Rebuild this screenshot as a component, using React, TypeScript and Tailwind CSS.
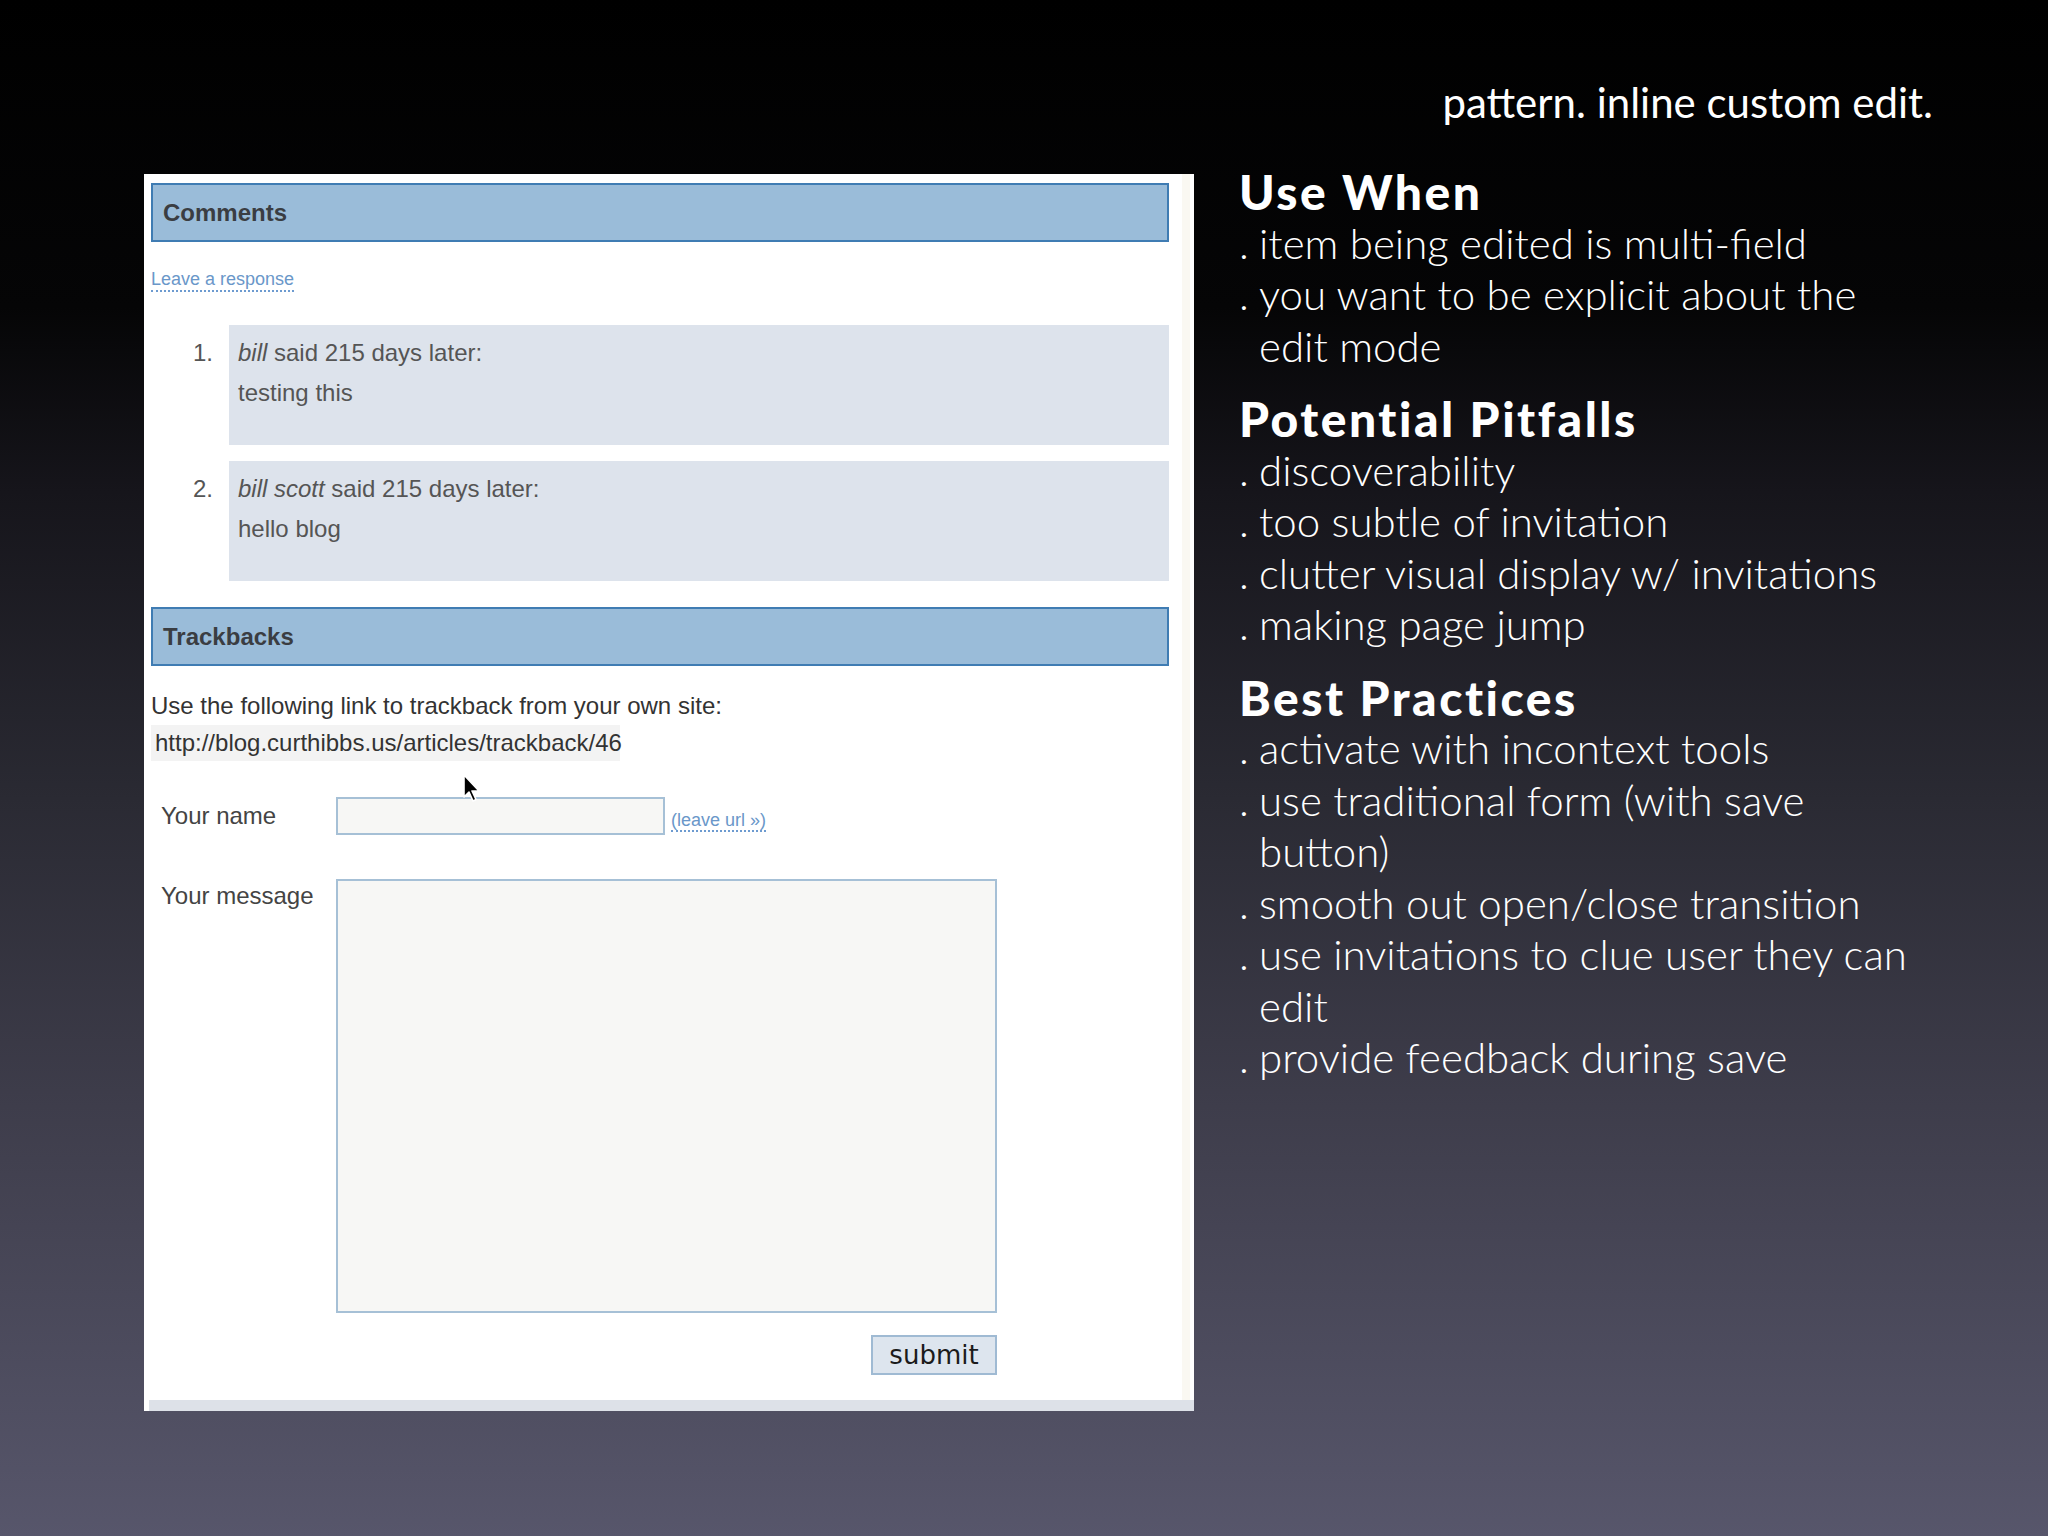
import React from "react";

// Slide: "pattern. inline custom edit." — screenshot of a blog comment form + notes.

const usaWhen = [
  ["item being edited is multi-field"],
  ["you want to be explicit about the", "edit mode"],
];

const pitfalls = [
  ["discoverability"],
  ["too subtle of invitation"],
  ["clutter visual display w/ invitations"],
  ["making page jump"],
];

const practices = [
  ["activate with incontext tools"],
  ["use traditional form (with save", "button)"],
  ["smooth out open/close transition"],
  ["use invitations to clue user they can", "edit"],
  ["provide feedback during save"],
];

function Bullet({ lines }: { lines: string[] }) {
  return (
    <div className="flex">
      <span className="w-[20px] shrink-0">.</span>
      <div>
        {lines.map((l) => (
          <div key={l}>{l}</div>
        ))}
      </div>
    </div>
  );
}

function Bagian({ judul, isi, first }: { judul: string; isi: string[][]; first?: boolean }) {
  return (
    <div className={first ? "" : "mt-[21px]"}>
      <h2 className="text-[48px] font-black tracking-[2.5px]">{judul}</h2>
      {isi.map((lines) => (
        <Bullet key={lines[0]} lines={lines} />
      ))}
    </div>
  );
}

function Header({ label }: { label: string }) {
  return (
    <div className="flex h-[59px] w-[1018px] items-center border-2 border-[#3f7cb3] bg-[#9abcd9] pl-[10px] text-[24px] font-bold text-[#3a3d42]">
      {label}
    </div>
  );
}

function Komentar({ no, nama, isi }: { no: string; nama: string; isi: string }) {
  return (
    <div className="flex">
      <div className="w-[78px] pr-[16px] pt-[14px] text-right text-[#555]">{no}</div>
      <div className="h-[120px] w-[940px] bg-[#dde3ec] pl-[9px] pt-[14px] text-[#555]">
        <div>
          <i>{nama}</i> said 215 days later:
        </div>
        <div className="mt-[12px]">{isi}</div>
      </div>
    </div>
  );
}

function Panel() {
  return (
    <div
      className="relative flex h-[1237px] w-[1050px] shrink-0 flex-col bg-white pl-[7px] pt-[9px] text-[24px] leading-[28px]"
      style={{ fontFamily: '"Liberation Sans", Arial, sans-serif' }}
    >
      <Header label="Comments" />
      <a className="mt-[26px] self-start border-b-2 border-dotted border-[#6d9bd0] text-[18px] leading-[22px] text-[#6a97c9]">
        Leave a response
      </a>
      <div className="mt-[33px] flex flex-col gap-[16px]">
        <Komentar no="1." nama="bill" isi="testing this" />
        <Komentar no="2." nama="bill scott" isi="hello blog" />
      </div>
      <div className="mt-[26px]">
        <Header label="Trackbacks" />
      </div>
      <p className="mt-[26px] text-[#333]">Use the following link to trackback from your own site:</p>
      <div className="mt-[5px] flex h-[36px] w-[469px] items-center bg-[#f3f3f3] pl-[4px] text-[#333]">
        http://blog.curthibbs.us/articles/trackback/46
      </div>

      <div className="mt-[36px] flex items-center">
        <span className="w-[185px] pl-[10px] text-[#444]">Your name</span>
        <div className="h-[38px] w-[329px] border-2 border-[#a6c0d6] bg-[#f7f7f5]" />
        <a className="ml-[6px] mt-[10px] border-b-2 border-dotted border-[#6d9bd0] text-[18px] leading-[20px] text-[#6a97c9]">
          (leave url »)
        </a>
      </div>

      <div className="mt-[44px] flex items-start">
        <span className="w-[185px] pl-[10px] pt-[3px] text-[#444]">Your message</span>
        <div className="h-[434px] w-[661px] border-2 border-[#a6c0d6] bg-[#f7f7f5]" />
      </div>

      <div className="mt-[22px] flex w-[846px] justify-end">
        <button
          type="button"
          className="h-[40px] w-[126px] border-2 border-[#9fbad3] bg-[#dde5ee] text-[26px] leading-none text-[#1b1b1b]"
          style={{ fontFamily: '"DejaVu Sans", Verdana, sans-serif' }}
        >
          submit
        </button>
      </div>

      <div className="absolute bottom-0 left-[5px] right-0 h-[11px] bg-[#dde1e8]" />
      <div className="absolute right-[4px] top-0 bottom-[11px] w-[8px] bg-[#faf8f2]" />

      {/* cursor */}
      <svg className="absolute left-[318px] top-[600px]" width="20" height="30" viewBox="0 0 20 30">
        <path
          d="M2 1 L2 23 L7 18 L11 27 L14 25.5 L10 17 L17 17 Z"
          fill="#000"
          stroke="#fff"
          strokeWidth="1.6"
          strokeLinejoin="round"
        />
      </svg>
    </div>
  );
}

export default function App() {
  return (
    <div
      className="h-[1536px] w-[2048px] overflow-hidden text-white"
      style={{
        background:
          "linear-gradient(to bottom, #000 0%, #050506 20%, #16151b 32%, #2a2a33 52%, #3e3d4b 72%, #57566b 100%)",
        fontFamily: 'Lato, "Noto Sans", sans-serif',
      }}
    >
      <div className="pr-[115px] pt-[77px] text-right text-[42px] leading-[50px]">
        pattern. inline custom edit.
      </div>
      <div className="ml-[144px] mt-[47px] flex items-start gap-[47px]">
        <Panel />
        <div className="-mt-[8px] -ml-[2px] text-[42px] font-light leading-[51.5px]">
          <Bagian judul="Use When" isi={usaWhen} first />
          <Bagian judul="Potential Pitfalls" isi={pitfalls} />
          <Bagian judul="Best Practices" isi={practices} />
        </div>
      </div>
    </div>
  );
}
